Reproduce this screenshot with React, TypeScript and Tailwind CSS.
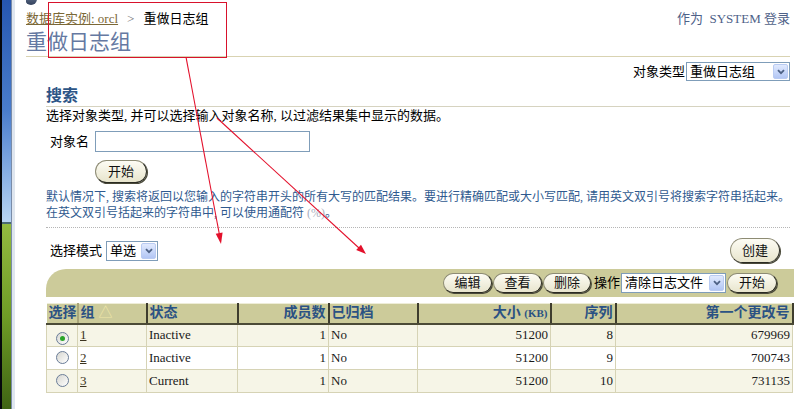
import React from "react";

function Chevron() {
  return (
    <svg width="8" height="6" viewBox="0 0 8 6">
      <path d="M1 1.2 L4 4.2 L7 1.2" fill="none" stroke="#4d6185" strokeWidth="1.8" />
    </svg>
  );
}

function Select({ text, w, h }: { text: string; w: string; h: string }) {
  return (
    <div className={`flex items-stretch border border-[#7f9db9] bg-white ${w} ${h}`}>
      <span className="flex-1 overflow-hidden whitespace-nowrap pl-[3px] text-[13px] leading-[17px] text-black">{text}</span>
      <span className="m-[1px] flex w-[15px] items-center justify-center rounded-[2px] border border-[#b9cbf2] bg-gradient-to-b from-[#e1eafe] to-[#b2c6f4]">
        <Chevron />
      </span>
    </div>
  );
}

function Btn({ text, w, h }: { text: string; w: string; h: string }) {
  return (
    <div
      className={`flex items-center justify-center rounded-full border border-[#8d8b74] border-r-[#2b2b22] border-b-[#2b2b22] bg-gradient-to-b from-[#fdfcf4] to-[#e8e5cd] text-[13px] text-[#111] shadow-[1px_1px_0_#4a4a3a] ${w} ${h}`}
    >
      {text}
    </div>
  );
}

function Radio({ checked }: { checked: boolean }) {
  return (
    <span className="inline-flex h-[13px] w-[13px] items-center justify-center rounded-full border border-[#6a7d98] bg-gradient-to-br from-[#d6d6d0] to-[#ffffff]">
      {checked && <span className="h-[5px] w-[5px] rounded-full bg-[#2aa52a]" />}
    </span>
  );
}

const rows = [
  { sel: true, g: "1", s: "Inactive", m: "1", a: "No", size: "51200", seq: "8", scn: "679969" },
  { sel: false, g: "2", s: "Inactive", m: "1", a: "No", size: "51200", seq: "9", scn: "700743" },
  { sel: false, g: "3", s: "Current", m: "1", a: "No", size: "51200", seq: "10", scn: "731135" },
];

export default function App() {
  const th =
    "h-[20px] border-t border-t-[#eeedd8] border-b-2 border-b-[#4b4a36] border-r-2 border-r-[#3e3d2e] px-[2px] text-[14px] font-bold leading-[18px] text-[#2b5283] whitespace-nowrap";
  const td = "h-[23px] border border-[#d6d3b5] px-[2px] text-[13px] leading-[20px] text-[#1a1a1a] whitespace-nowrap";
  return (
    <div className="relative flex h-[409px] w-[794px] overflow-hidden bg-white font-['Liberation_Serif','Noto_Sans_CJK_SC',serif] text-black">
      {/* desktop edge */}
      <div className="flex h-full w-[15px] shrink-0">
        <div className="w-[2px] bg-[#05070c]" />
        <div className="flex w-[9px] flex-col">
          <div className="h-[222px] bg-gradient-to-b from-[#2656b0] via-[#4a7dcc] to-[#b9d5f4]" />
          <div className="h-[2px] bg-[#4a6a72]" />
          <div className="flex-1 bg-gradient-to-b from-[#93bb40] via-[#6f9c26] to-[#3f6414]" />
        </div>
        <div className="w-[1px] bg-[#7a8ca8]" />
        <div className="w-[3px] bg-[#dfe6ef]" />
      </div>

      <div className="flex w-[779px] flex-col pl-[11px] pr-[4px]">
        <div className="h-[9px] overflow-hidden">
          <div className="-ml-[1px] -mt-[7px] h-[12px] w-[12px] rounded-full bg-gradient-to-b from-[#7384a0] to-[#33415c]" />
        </div>
        <div className="flex h-[19px] items-center justify-between text-[13px]">
          <div className="flex items-center">
            <span className="text-[#7b6836] underline">数据库实例: orcl</span>
            <span className="mx-[9px] text-[#777]">&gt;</span>
            <span>重做日志组</span>
          </div>
          <div className="text-[#4e6188]">作为&nbsp; SYSTEM 登录</div>
        </div>
        <div className="h-[29px] border-b border-[#d9d3b2] text-[21px] leading-[28px] text-[#6579a2]">重做日志组</div>

        <div className="mt-[5px] flex h-[19px] items-center justify-end gap-[1px]">
          <span className="text-[13px]">对象类型</span>
          <Select text="重做日志组" w="w-[104px]" h="h-[19px]" />
        </div>

        <div className="ml-[20px] flex flex-col">
          <div className="mt-[4px] h-[22px] border-b border-[#d6d3c0] text-[16px] font-bold leading-[21px] text-[#2d5586]">搜索</div>
          <div className="mt-[1px] text-[13px] leading-[16px]">选择对象类型, 并可以选择输入对象名称, 以过滤结果集中显示的数据。</div>
          <div className="mt-[7px] flex h-[21px] items-center gap-[6px] pl-[4px] text-[13px]">
            <span>对象名</span>
            <div className="h-[21px] w-[215px] border border-[#7f9db9] bg-white" />
          </div>
          <div className="ml-[49px] mt-[8px]">
            <Btn text="开始" w="w-[52px]" h="h-[23px]" />
          </div>
          <div className="mt-[6px] text-[12px] leading-[16px] text-[#2f5a8f]">
            <div>默认情况下, 搜索将返回以您输入的字符串开头的所有大写的匹配结果。要进行精确匹配或大小写匹配, 请用英文双引号将搜索字符串括起来。</div>
            <div>
              在英文双引号括起来的字符串中, 可以使用通配符 <span className="text-[#a8b0c0]">(%)</span>。
            </div>
          </div>
          <div className="mt-[6px] border-t border-dotted border-[#b5b5b5]" />
          <div className="mt-[9px] flex h-[27px] items-center justify-between pl-[4px] pr-[10px]">
            <div className="flex items-center gap-[4px]">
              <span className="text-[13px]">选择模式</span>
              <Select text="单选" w="w-[52px]" h="h-[20px]" />
            </div>
            <Btn text="创建" w="w-[50px]" h="h-[25px]" />
          </div>

          <div className="-mr-[4px] mt-[5px] flex h-[28px] items-center justify-end gap-[1px] rounded-tl-[20px] bg-[#cccb9a] pr-[17px]">
            <Btn text="编辑" w="w-[49px]" h="h-[20px]" />
            <Btn text="查看" w="w-[49px]" h="h-[20px]" />
            <Btn text="删除" w="w-[48px]" h="h-[20px]" />
            <span className="ml-[2px] text-[13px]">操作</span>
            <Select text="清除日志文件" w="w-[105px]" h="h-[20px]" />
            <Btn text="开始" w="w-[50px]" h="h-[20px]" />
          </div>

          <table className="mt-[6px] w-[746px] table-fixed border-collapse">
            <colgroup>
              <col className="w-[31px]" />
              <col className="w-[69px]" />
              <col className="w-[91px]" />
              <col className="w-[91px]" />
              <col className="w-[89px]" />
              <col className="w-[133px]" />
              <col className="w-[65px]" />
              <col className="w-[177px]" />
            </colgroup>
            <thead>
              <tr className="bg-[#cccb9a]">
                <th className={`${th} border-r border-r-[#a9a67a] text-left`}>选择</th>
                <th className={`${th} text-left`}>
                  组<span className="ml-[4px] font-normal text-[#efe7a8]">△</span>
                </th>
                <th className={`${th} text-left`}>状态</th>
                <th className={`${th} text-right`}>成员数</th>
                <th className={`${th} text-left`}>已归档</th>
                <th className={`${th} text-right`}>
                  大小 <span className="text-[11px]">(KB)</span>
                </th>
                <th className={`${th} text-right`}>序列</th>
                <th className={`${th} text-right`}>第一个更改号</th>
              </tr>
            </thead>
            <tbody>
              {rows.map((r, i) => (
                <tr key={r.g} className={i % 2 === 0 ? "bg-[#f6f5e7]" : "bg-white"}>
                  <td className={`${td} text-center`}>
                    <span className="inline-flex translate-y-[2px]">
                      <Radio checked={r.sel} />
                    </span>
                  </td>
                  <td className={td}>
                    <span className="text-[#3b3320] underline">{r.g}</span>
                  </td>
                  <td className={td}>{r.s}</td>
                  <td className={`${td} text-right`}>{r.m}</td>
                  <td className={td}>{r.a}</td>
                  <td className={`${td} text-right`}>{r.size}</td>
                  <td className={`${td} text-right`}>{r.seq}</td>
                  <td className={`${td} text-right`}>{r.scn}</td>
                </tr>
              ))}
            </tbody>
          </table>
        </div>
      </div>

      {/* annotation overlay */}
      <div className="pointer-events-none absolute left-[48px] top-[2px] h-[56px] w-[179px] border border-[#d8122c]" />
      <svg className="pointer-events-none absolute left-0 top-0" width="794" height="409">
        <line x1="186" y1="57" x2="219.5" y2="235" stroke="#e3102b" strokeWidth="1.1" />
        <polygon points="221,244 215.7,233.8 222.6,232.5" fill="#e3102b" />
        <line x1="217" y1="118" x2="359" y2="248" stroke="#e3102b" strokeWidth="1.1" />
        <polygon points="366,254 356.2,249.9 361,244.7" fill="#e3102b" />
      </svg>
    </div>
  );
}
